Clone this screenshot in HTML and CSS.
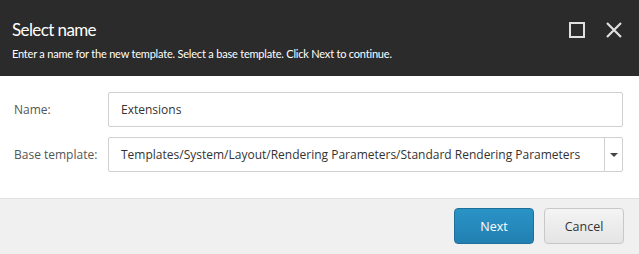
FILE: index.html
```html
<!DOCTYPE html>
<html lang="en">
  <head>
    <meta charset="UTF-8" />
    <title>Select name</title>
    <link rel="stylesheet" href="styles.css">
  </head>
  <body>
    <div class="dialog">
      <div class="dialog-header">
        <div class="header-text">
          <h1>Select name</h1>
          <p>Enter a name for the new template. Select a base template. Click Next to continue.</p>
        </div>
        <div class="header-icons">
          <svg width="16" height="16" viewBox="0 0 16 16">
            <rect x="1" y="1" width="14" height="14" fill="none" stroke="#e0e0e0" stroke-width="2" />
          </svg>
          <svg width="18" height="18" viewBox="0 0 18 18">
            <path d="M2 2 L16 16 M16 2 L2 16" stroke="#e0e0e0" stroke-width="2.2" />
          </svg>
        </div>
      </div>

      <div class="dialog-body">
        <div class="row">
          <label>Name:</label>
          <div class="field">Extensions</div>
        </div>
        <div class="row">
          <label>Base template:</label>
          <div class="select">
            <div class="select-value">Templates/System/Layout/Rendering Parameters/Standard Rendering Parameters</div>
            <div class="select-arrow"><span class="caret"></span></div>
          </div>
        </div>
      </div>

      <div class="dialog-footer">
        <button class="btn btn-primary">Next</button>
        <button class="btn">Cancel</button>
      </div>
    </div>
  </body>
</html>
```

FILE: styles.css
```css
body {
  margin: 0;
  font-family: "Open Sans", "Noto Sans", sans-serif;
  background-color: #fff;
}
.dialog {
  width: 639px;
  height: 254px;
  display: flex;
  flex-direction: column;
}
.dialog-header {
  background-color: #2b2b2b;
  color: #fff;
  height: 76px;
  display: flex;
  justify-content: space-between;
  padding: 0 16px 0 12px;
  box-sizing: border-box;
  font-family: Lato, "Open Sans", sans-serif;
}
.dialog-header h1 {
  margin: 18px 0 0;
  font-size: 17px;
  font-weight: 400;
  letter-spacing: -0.6px;
  line-height: 24px;
}
.dialog-header p {
  margin: 4px 0 0;
  font-size: 11px;
  font-weight: 400;
  letter-spacing: -0.2px;
  line-height: 16px;
}
.header-icons {
  display: flex;
  align-items: center;
  gap: 20px;
  height: 60px;
}
.dialog-body {
  flex: 1;
  padding: 16px 16px 0 14px;
}
.row {
  display: flex;
  align-items: center;
  height: 35px;
  margin-bottom: 10px;
}
.row label {
  width: 94px;
  font-size: 12px;
  color: #555;
}
.field,
.select {
  height: 35px;
  box-sizing: border-box;
  border: 1px solid #d0d0d0;
  border-radius: 2px;
  width: 515px;
  font-size: 12px;
  color: #333;
}
.field {
  padding: 8px 12px;
}
.select {
  display: flex;
}
.select-value {
  flex: 1;
  padding: 8px 12px;
  white-space: nowrap;
  overflow: hidden;
}
.select-arrow {
  width: 17px;
  border-left: 1px solid #d0d0d0;
  display: flex;
  align-items: center;
  justify-content: center;
}
.caret {
  width: 0;
  height: 0;
  border-left: 4px solid transparent;
  border-right: 4px solid transparent;
  border-top: 4px solid #444;
}
.dialog-footer {
  height: 56px;
  background-color: #f0f0f0;
  border-top: 1px solid #e0e0e0;
  display: flex;
  justify-content: flex-end;
  align-items: flex-start;
  gap: 10px;
  padding: 9px 15px 0 0;
  box-sizing: border-box;
}
.btn {
  width: 80px;
  height: 36px;
  border: 1px solid #c8c8c8;
  border-radius: 4px;
  background: linear-gradient(#f4f4f4, #e4e4e4);
  color: #333;
  font-family: "Open Sans", "Noto Sans", sans-serif;
  font-size: 12.5px;
}
.btn-primary {
  border-color: #1e6f99;
  background: linear-gradient(#2a93c6, #2280b2);
  color: #fff;
}
```
